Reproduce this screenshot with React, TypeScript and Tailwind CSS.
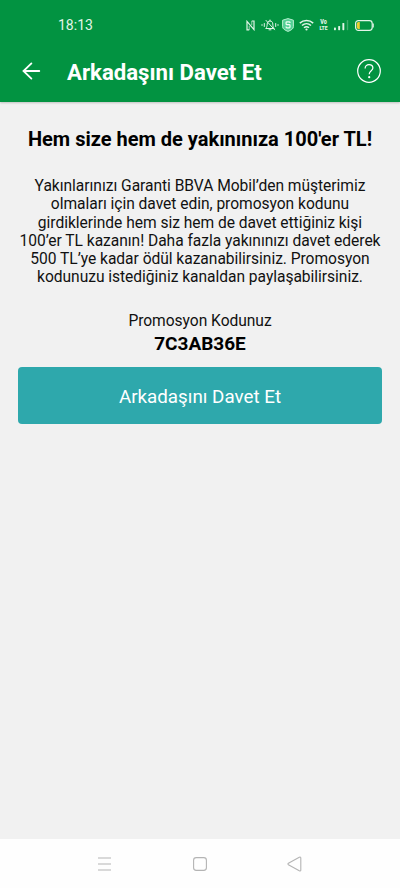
const LINES = [
    "Yakınlarınızı Garanti BBVA Mobil’den müşterimiz",
    "olmaları için davet edin, promosyon kodunu",
    "girdiklerinde hem siz hem de davet ettiğiniz kişi",
    "100’er TL kazanın! Daha fazla yakınınızı davet ederek",
    "500 TL’ye kadar ödül kazanabilirsiniz. Promosyon",
    "kodunuzu istediğiniz kanaldan paylaşabilirsiniz.",
];

function StatusIcons() {
    return (
        <div className="flex items-center text-[#e3f5e8]">
            {/* nfc */}
            <svg width="9" height="11" viewBox="0 0 9 11" fill="none" stroke="currentColor" strokeWidth="1.2">
                <path d="M3.2 9.9H1V1.4L8 9.6V1H5.8" />
                <path d="M3.2 5.8V9.9M5.8 1V5.2" strokeWidth="0.7" />
            </svg>
            {/* muted bell */}
            <svg className="ml-[6px]" width="18" height="12" viewBox="0 0 18 12" fill="none" stroke="currentColor" strokeWidth="1" strokeLinecap="round">
                <path d="M5 9.2C6 8 6.1 7 6.2 5C6.3 3 7.4 2 9 2S11.7 3 11.8 5C11.9 7 12 8 13 9.2ZM8 10.8H10M9 1V2" />
                <path d="M5 1.4L13.6 10.8" />
                <path d="M3.3 4.5V7.5M14.7 4.5V7.5M1 5.6V6.4M17 5.6V6.4" />
            </svg>
            {/* shield */}
            <svg className="ml-[3px]" width="12" height="14" viewBox="0 0 12 14">
                <path d="M6 .6L11.4 2.2V8.7C11.4 10.8 9 12.3 6 13.4C3 12.3 .6 10.8 .6 8.7V2.2Z" fill="#52cf94" stroke="#b9efd0" strokeWidth="1" />
                <path d="M8 5V4.6Q8 3.8 7.2 3.8H4.9Q4.1 3.8 4.1 4.6V5.9Q4.1 6.7 4.9 6.7H7.2Q8 6.7 8 7.5V9Q8 9.8 7.2 9.8H4.9Q4.1 9.8 4.1 9V8.6" fill="none" stroke="#effff5" strokeWidth="1.2" />
            </svg>
            {/* wifi */}
            <svg className="ml-[5px]" width="15" height="12" viewBox="0 0 15 12" fill="none" stroke="currentColor" strokeWidth="1.5">
                <path d="M.8 4.1C4.6 .5 10.4 .5 14.2 4.1M3 6.5C5.6 4 9.4 4 12 6.5M5 8.8C6.5 7.5 8.5 7.5 10 8.8" />
                <circle cx="7.5" cy="10.5" r="1.1" fill="currentColor" stroke="none" />
            </svg>
            {/* volte */}
            <div className="ml-[5px] flex w-[9px] scale-y-125 flex-col items-center text-[5px] leading-[5px] font-black">
                <span className="text-[5.4px]">Vo</span>
                <span>LTE</span>
            </div>
            {/* signal */}
            <svg className="ml-[6px]" width="15" height="12" viewBox="0 0 15 12" fill="currentColor">
                <rect x="0" y="8.6" width="1.9" height="2.6" rx=".6" />
                <rect x="4.2" y="7" width="1.9" height="4.2" rx=".6" />
                <rect x="8.4" y="4" width="1.9" height="7.2" rx=".6" />
                <rect x="12.8" y="1" width="1.4" height="10.2" rx=".6" opacity=".28" />
            </svg>
            {/* battery */}
            <svg className="ml-[6px]" width="19" height="11" viewBox="0 0 19 11">
                <rect x=".6" y=".6" width="16.6" height="9.8" rx="2.8" fill="none" stroke="currentColor" strokeWidth="1.2" />
                <path d="M18.2 3.6V7.4" stroke="currentColor" strokeWidth="1.2" />
                <path d="M4.8 1.9V9.1H3.6Q1.8 9.1 1.8 7.3V3.7Q1.8 1.9 3.6 1.9Z" fill="#f0cf30" />
            </svg>
        </div>
    );
}

function Header() {
    return (
        <header className="h-[102px] bg-[#029341] text-white shadow-[0_1px_2px_rgba(0,0,0,0.2)]">
            <div className="flex h-[50px] items-center justify-between pr-[26px] pl-[58px]">
                <span className="text-[14px] text-[#e3f5e8]">18:13</span>
                <StatusIcons />
            </div>
            <div className="flex h-[42px] items-center pr-[19px] pl-[22px]">
                <button aria-label="Geri">
                    <svg className="block" width="19" height="18" viewBox="0 0 19 18" fill="none" stroke="currentColor" strokeWidth="1.8" strokeLinecap="round">
                        <path d="M17.3 9H1.5M9.4 1.4L1.5 9L9.4 16.6" />
                    </svg>
                </button>
                <h1 className="ml-[26px] flex-1 pt-[3px] text-[22.2px] font-bold whitespace-nowrap">Arkadaşını Davet Et</h1>
                <button aria-label="Yardım">
                    <svg className="block" width="24" height="24" viewBox="0 0 24 24" fill="none" stroke="currentColor" strokeWidth="1.2">
                        <circle cx="12" cy="12" r="11.3" />
                        <path d="M8.1 9.4C8.1 7 9.8 5.6 12 5.6S15.9 7 15.9 9.1C15.9 11.8 12.2 11.9 12.2 15.2" />
                        <circle cx="12.2" cy="18.2" r="1.1" fill="currentColor" stroke="none" />
                    </svg>
                </button>
            </div>
        </header>
    );
}

function NavBar() {
    return (
        <nav className="flex h-[49px] items-center justify-between bg-[#fefefe] pr-[98px] pl-[97px] text-[#b4b4b4]">
            <svg width="15" height="14" viewBox="0 0 15 14" stroke="currentColor" strokeWidth="1.1">
                <path d="M1 1H14M1 7H14M1 13H14" />
            </svg>
            <svg width="14" height="14" viewBox="0 0 14 14" fill="none" stroke="currentColor" strokeWidth="1.1">
                <rect x=".6" y=".6" width="12.8" height="12.8" rx="2.6" />
            </svg>
            <svg width="15" height="16" viewBox="0 0 15 16" fill="none" stroke="currentColor" strokeWidth="1.1" strokeLinejoin="round">
                <path d="M1.4 7.3L12.3 1.2Q13.8 .6 13.8 2.1V13.9Q13.8 15.4 12.3 14.8L1.4 8.7Q.5 8 1.4 7.3Z" />
            </svg>
        </nav>
    );
}

export default function App() {
    return (
        <div className="flex h-[888px] w-[400px] flex-col overflow-hidden bg-[#f1f1f1] font-['Roboto',sans-serif] text-black">
            <Header />
            <main className="flex flex-1 flex-col px-[18px] pt-[25px] text-center">
                <h2 className="text-[20px] leading-[24px] font-bold whitespace-nowrap">Hem size hem de yakınınıza 100'er TL!</h2>
                <p className="mt-[26px] text-[15.6px] leading-[18.3px] tracking-[-0.04px] text-[#111]">
                    {LINES.map((line) => (
                        <span key={line} className="block whitespace-nowrap">{line}</span>
                    ))}
                </p>
                <div className="mt-[25px] text-[15.6px] leading-[18px] tracking-[-0.04px] text-[#111]">Promosyon Kodunuz</div>
                <div className="mt-[2px] text-[19px] leading-[24px] font-bold">7C3AB36E</div>
                <button className="mt-[11px] h-[57px] rounded bg-[#2ea8ac] pt-[3px] text-[18.8px] text-white">Arkadaşını Davet Et</button>
            </main>
            <NavBar />
        </div>
    );
}
